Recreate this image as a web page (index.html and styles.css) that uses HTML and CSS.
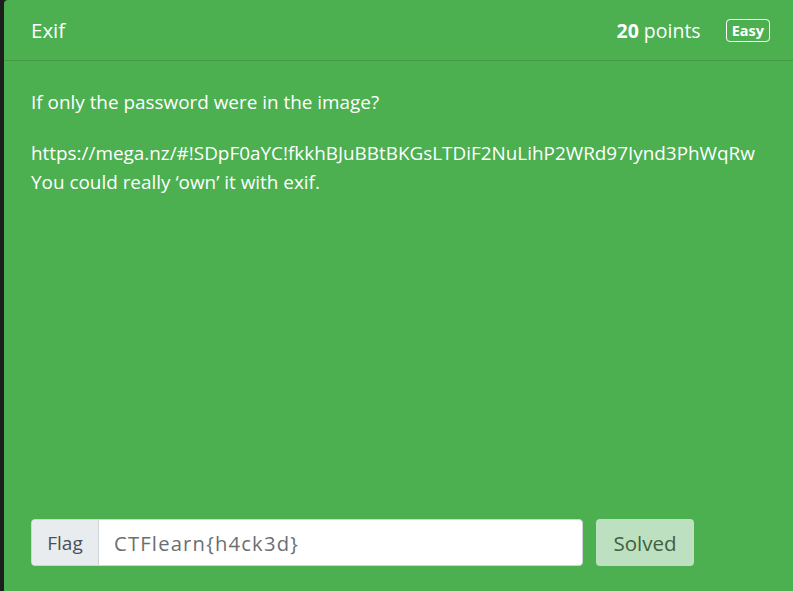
FILE: index.html
```html
<!DOCTYPE html>
<html>
<head>
<meta charset="utf-8">
<link rel="stylesheet" href="styles.css">
</head>
<body>
<div class="card">
  <div class="card-header">
    <span class="title">Exif</span>
    <div class="meta">
      <span class="points"><b>20</b> points</span>
      <span class="badge">Easy</span>
    </div>
  </div>
  <div class="card-body">
    <p class="desc">If only the password were in the image?</p>
    <p class="desc">https://mega.nz/#!SDpF0aYC!fkkhBJuBBtBKGsLTDiF2NuLihP2WRd97Iynd3PhWqRw<br>You could really ‘own’ it with exif.</p>
    <div class="flag-row">
      <div class="input-group">
        <span class="addon">Flag</span>
        <span class="input">CTFlearn{h4ck3d}</span>
      </div>
      <span class="btn">Solved</span>
    </div>
  </div>
</div>
</body>
</html>
```
FILE: styles.css
```css
html, body {
  margin: 0;
  padding: 0;
  height: 100%;
}
body {
  background: #1e1e1e;
  padding-left: 4px;
  box-sizing: border-box;
  font-family: "Open Sans", "Noto Sans", sans-serif;
  overflow: hidden;
}
.card {
  background: #4caf50;
  height: 591px;
  border-top-left-radius: 4px;
  display: flex;
  flex-direction: column;
  color: #fff;
}
.card-header {
  height: 61px;
  border-bottom: 1px solid rgba(0,0,0,0.125);
  display: flex;
  align-items: center;
  justify-content: space-between;
  padding: 0 23px 0 27px;
  box-sizing: border-box;
}
.title {
  font-size: 20.5px;
}
.meta {
  display: flex;
  align-items: center;
  gap: 25px;
}
.points {
  font-size: 19.5px;
}
.points b {
  font-weight: 700;
}
.badge {
  border: 1px solid #fff;
  border-radius: 4px;
  font-size: 14.5px;
  font-weight: 700;
  padding: 1px 5px;
  line-height: 19px;
}
.card-body {
  flex: 1;
  display: flex;
  flex-direction: column;
  padding: 0 20px 0 27px;
}
.desc {
  font-size: 18.9px;
  line-height: 29px;
  margin: 0;
  white-space: nowrap;
}
.desc:first-child {
  margin-top: 27px;
  margin-bottom: 22px;
}
.flag-row {
  margin-top: auto;
  margin-bottom: 25px;
  display: flex;
  align-items: stretch;
  gap: 13px;
}
.input-group {
  display: flex;
  width: 552px;
  height: 47px;
  box-sizing: border-box;
  border: 1px solid #ced4da;
  border-radius: 4px;
  overflow: hidden;
  background: #fff;
}
.addon {
  background: #e9ecef;
  color: #495057;
  border-right: 1px solid #ced4da;
  width: 66px;
  display: flex;
  align-items: center;
  justify-content: center;
  font-size: 19px;
}
.input {
  flex: 1;
  display: flex;
  align-items: center;
  padding-left: 15px;
  color: #6b6f73;
  font-size: 20.2px;
  letter-spacing: 1.2px;
}
.btn {
  width: 98px;
  height: 47px;
  background: #bde0c0;
  border-radius: 4px;
  color: #3f5f43;
  display: flex;
  align-items: center;
  justify-content: center;
  font-size: 20.5px;
}
```
